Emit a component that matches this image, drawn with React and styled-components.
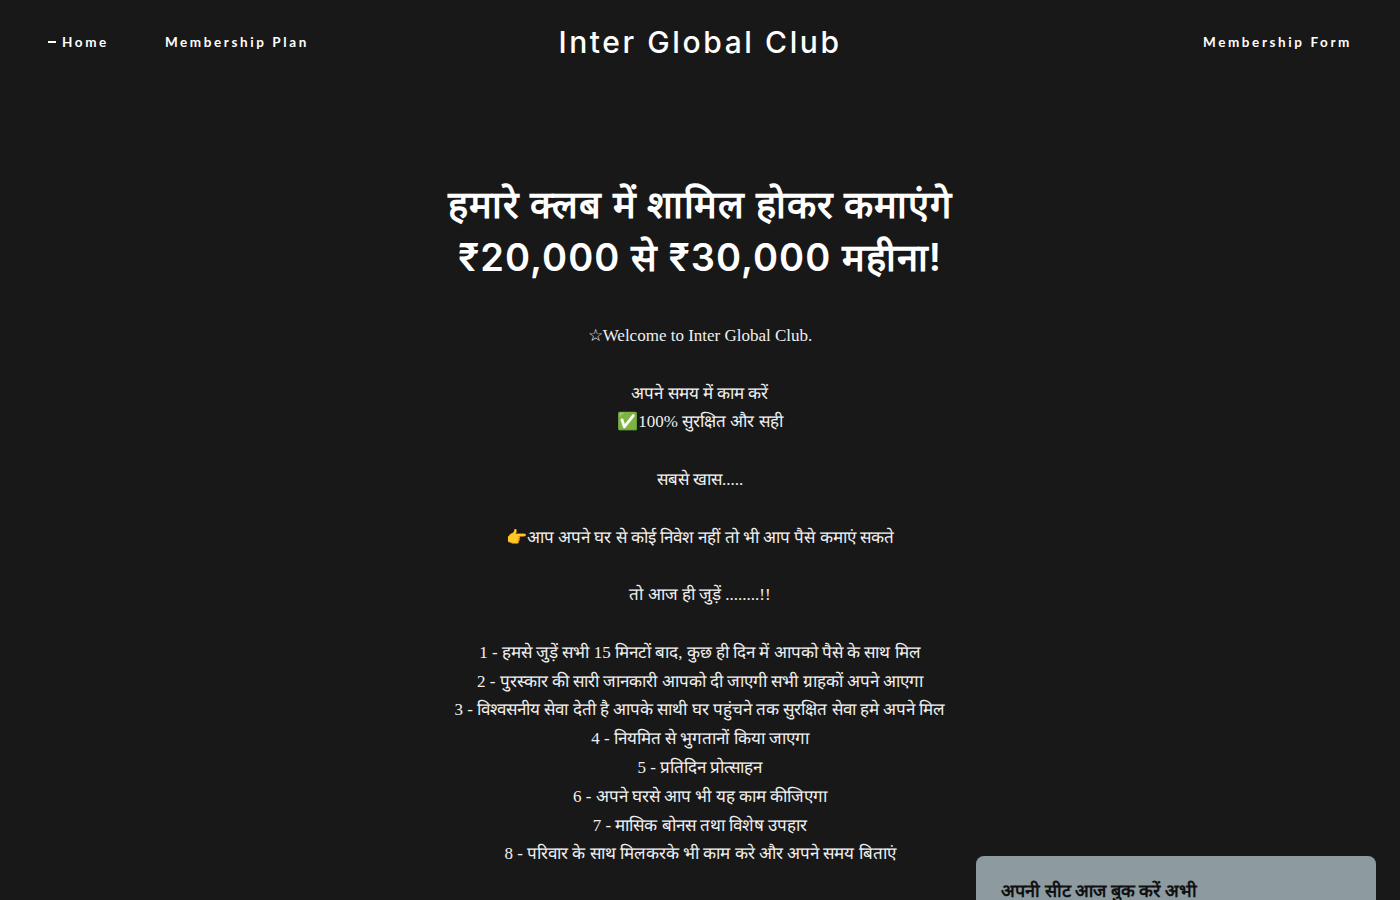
import React from "react";
import styled, { createGlobalStyle } from "styled-components";

const GlobalStyle = createGlobalStyle`
  html, body {
    margin: 0;
    padding: 0;
    background: #181818;
  }
  body {
    font-family: "Liberation Serif", serif;
    color: #f2f2f2;
  }
`;

const Page = styled.div`
  min-height: 900px;
  background: #181818;
  overflow: hidden;
`;

const Header = styled.header`
  display: grid;
  grid-template-columns: 1fr auto 1fr;
  align-items: center;
  height: 84px;
  padding: 0 48px;
`;

const Nav = styled.nav`
  display: flex;
  gap: 56px;
  justify-self: ${(p) => (p.$right ? "end" : "start")};
`;

const NavLink = styled.a`
  font-family: "Lato", "Inter", sans-serif;
  font-weight: 700;
  font-size: 13.5px;
  letter-spacing: 2.6px;
  color: #ffffff;
  text-decoration: none;
  display: flex;
  align-items: center;

  &::before {
    content: "";
    display: ${(p) => (p.$active ? "block" : "none")};
    width: 8px;
    height: 2px;
    background: #fff;
    margin-right: 6px;
  }
`;

const Logo = styled.a`
  font-family: "Inter", "Lato", sans-serif;
  font-weight: 500;
  font-size: 30px;
  letter-spacing: 2.6px;
  color: #ffffff;
  text-decoration: none;
`;

const Main = styled.main`
  display: flex;
  flex-direction: column;
  align-items: center;
  padding-top: 94px;
  text-align: center;
`;

const Headline = styled.h1`
  margin: 0 0 38px;
  font-family: "Inter", "Lato", sans-serif;
  font-weight: 600;
  font-size: 38px;
  line-height: 53px;
  letter-spacing: 1px;
  color: #ffffff;
`;

const Body = styled.div`
  font-family: "Liberation Serif", serif;
  font-size: 17px;
  line-height: 28.8px;
  color: #f0f0f0;
`;

const Line = styled.p`
  margin: 0;
  min-height: 28.8px;
`;

const Notice = styled.div`
  position: fixed;
  right: 24px;
  bottom: -60px;
  width: 400px;
  height: 104px;
  box-sizing: border-box;
  padding: 22px 25px;
  background: #8d9aa0;
  border-radius: 8px;
  font-family: "Inter", sans-serif;
  font-size: 18px;
  font-weight: 600;
  color: #111;
`;

const lines = [
  "☆Welcome to Inter Global Club.",
  "",
  "अपने समय में काम करें",
  "✅100% सुरक्षित और सही",
  "",
  "सबसे खास.....",
  "",
  "👉आप अपने घर से कोई निवेश नहीं तो भी आप पैसे कमाएं सकते",
  "",
  "तो आज ही जुड़ें ........!!",
  "",
  "1 - हमसे जुड़ें सभी 15 मिनटों बाद, कुछ ही दिन में आपको पैसे के साथ मिल",
  "2 - पुरस्कार की सारी जानकारी आपको दी जाएगी सभी ग्राहकों अपने आएगा",
  "3 - विश्वसनीय सेवा देती है आपके साथी घर पहुंचने तक सुरक्षित सेवा हमे अपने मिल",
  "4 - नियमित से भुगतानों किया जाएगा",
  "5 - प्रतिदिन प्रोत्साहन",
  "6 - अपने घरसे आप भी यह काम कीजिएगा",
  "7 - मासिक बोनस तथा विशेष उपहार",
  "8 - परिवार के साथ मिलकरके भी काम करे और अपने समय बिताएं",
];

export default function App() {
  return (
    <Page>
      <GlobalStyle />
      <Header>
        <Nav>
          <NavLink href="#" $active>Home</NavLink>
          <NavLink href="#">Membership Plan</NavLink>
        </Nav>
        <Logo href="#">Inter Global Club</Logo>
        <Nav $right>
          <NavLink href="#">Membership Form</NavLink>
        </Nav>
      </Header>
      <Main>
        <Headline>
          हमारे क्लब में शामिल होकर कमाएंगे
          <br />
          ₹20,000 से ₹30,000 महीना!
        </Headline>
        <Body>
          {lines.map((t, i) => (
            <Line key={i}>{t}</Line>
          ))}
        </Body>
      </Main>
      <Notice>अपनी सीट आज बुक करें अभी</Notice>
    </Page>
  );
}
